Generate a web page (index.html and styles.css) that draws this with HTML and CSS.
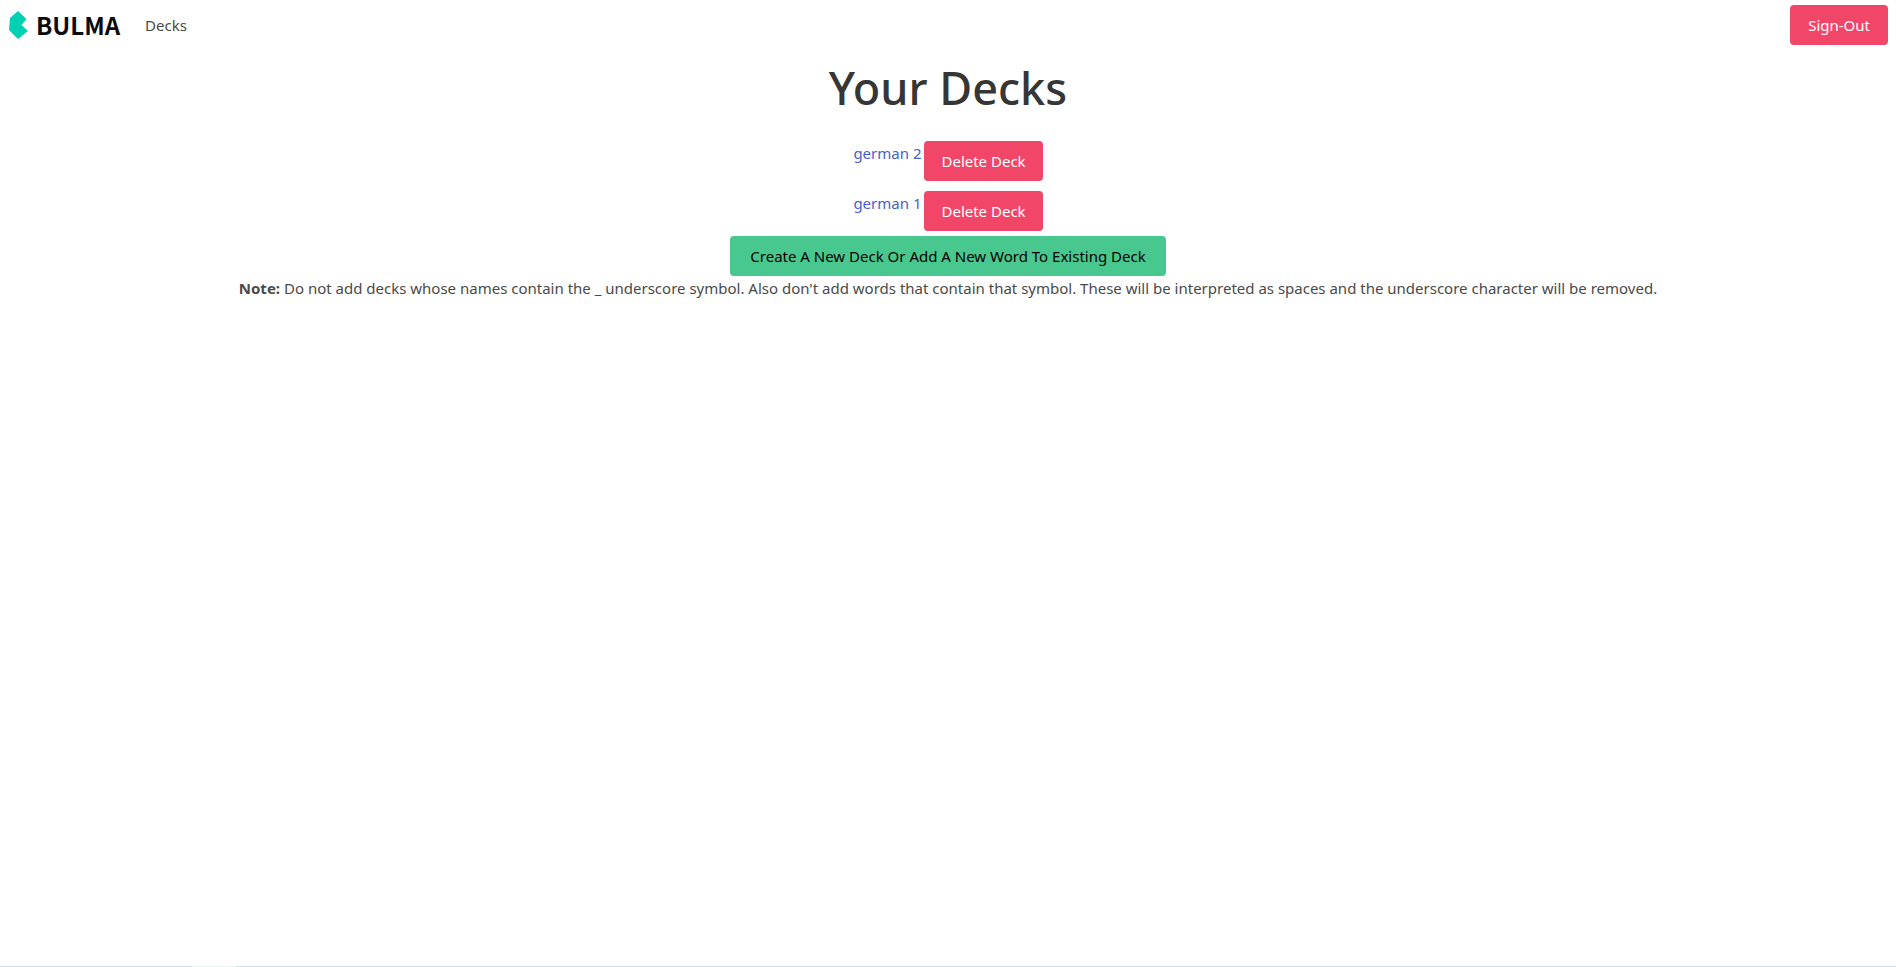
FILE: index.html
```html
<!DOCTYPE html>
<html lang="en">
<head>
<meta charset="utf-8">
<meta name="viewport" content="width=device-width, initial-scale=1">
<title>Your Decks</title>
<link rel="stylesheet" href="styles.css">
</head>
<body>
<nav class="navbar" aria-label="main navigation">
  <a class="brand" href="#">
    <svg class="brand-mark" viewBox="0 0 19 28" aria-hidden="true"><path fill="#00d1b2" d="M0 19 1 7 9 0l8.500 8-5 6 6.500 6-10 8z"/></svg>
    <span class="brand-name">BULMA</span>
  </a>
  <a class="nav-link" href="#">Decks</a>
  <button class="button danger sign-out" type="button">Sign-Out</button>
</nav>
<main class="content">
  <h1 class="title">Your Decks</h1>
  <ul class="decks">
    <li class="deck"><a class="deck-link" href="#">german 2</a><button class="button danger" type="button">Delete Deck</button></li>
    <li class="deck"><a class="deck-link" href="#">german 1</a><button class="button danger" type="button">Delete Deck</button></li>
  </ul>
  <button class="button success" type="button">Create A New Deck Or Add A New Word To Existing Deck</button>
  <p class="note"><strong>Note:</strong> Do not add decks whose names contain the _ underscore symbol. Also don't add words that contain that symbol. These will be interpreted as spaces and the underscore character will be removed.</p>
</main>
<footer class="edge"></footer>
</body>
</html>
```
FILE: styles.css
```css
* { box-sizing: border-box; margin: 0; padding: 0; }
body {
  min-height: 100vh;
  display: flex;
  flex-direction: column;
  background: #fff;
  color: #4a4a4a;
  font: 15px/24px "Segoe UI", "Noto Sans", sans-serif;
}
a { color: #485fc7; text-decoration: none; }
.navbar { display: flex; align-items: center; height: 50px; padding: 0 8px 0 9px; }
.brand { display: flex; align-items: center; gap: 8px; color: #0a0a0a; }
.brand-mark { width: 19px; height: 28px; }
.brand-name { font: 700 24px/28px "Noto Sans CJK JP", sans-serif; }
.navbar .nav-link { margin-left: 25px; color: #4a4a4a; }
.sign-out { margin-left: auto; }
.button {
  height: 40px;
  padding: 0 17px;
  border: 0;
  border-radius: 4px;
  font: inherit;
  cursor: pointer;
}
.danger { background: #f14668; color: #fff; }
.navbar .sign-out { padding: 0 18px; }
.success { padding: 0 20px; background: #48c78e; color: #000; }
.content { flex: 1; display: flex; flex-direction: column; align-items: center; padding-top: 11px; }
.title { color: #363636; font: 500 45px/54px "Noto Sans", sans-serif; }
.decks { list-style: none; margin-top: 21px; }
.deck { display: flex; gap: 3px; padding: 5px 0; }
.note { text-align: center; }
.edge { height: 1px; background: linear-gradient(to right, #d5dfe6 192px, #edf6f5 192px 236px, #d5dfe6 236px); }
```
